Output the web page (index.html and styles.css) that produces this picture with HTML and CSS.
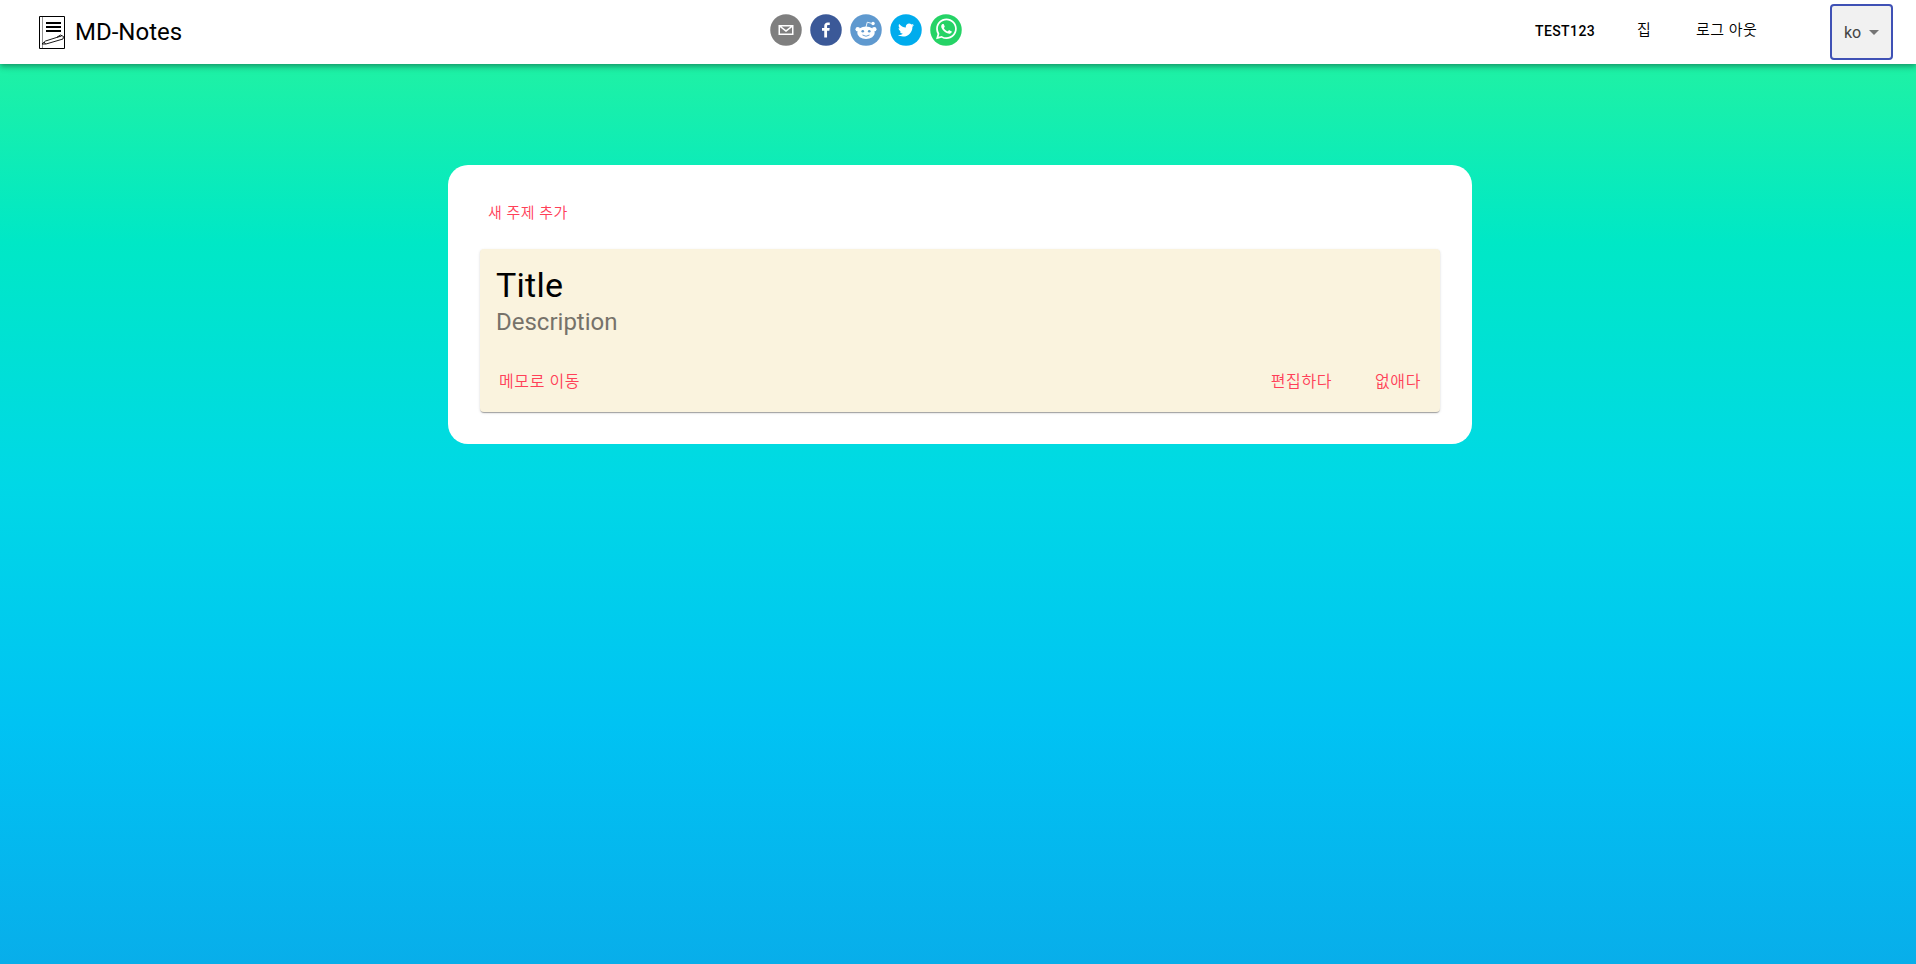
FILE: index.html
```html
<!DOCTYPE html>
<html lang="ko">
<head>
<meta charset="utf-8">
<title>MD-Notes</title>
<link rel="stylesheet" href="styles.css">
</head>
<body>
<header class="navbar">
  <div class="brand">
    <svg class="logo" viewBox="0 0 26 33"><path d="M.5.5h25v32H.5z" fill="#fff" stroke="#000"/><path d="M3.500 1v31" stroke="#777" stroke-width=".8"/><path d="M7 7h15M7 11h15M7 15h15" stroke="#000" stroke-width="2"/><path d="M3 28l3.500-3 11-3.500 4-2.500 3 1.500-.5 2.500-17 5zM5 26l1.500 2M17.500 21.500l5-1.500" fill="#fff" stroke="#000" stroke-width=".9"/></svg>
    <span class="brand-name">MD-Notes</span>
  </div>
  <div class="share">
    <svg viewBox="0 0 64 64"><circle cx="32" cy="32" r="31.500" fill="#7f7f7f"/><path fill="#fff" d="M17,22v20h30V22H17z M41.1,25L32,32.1L22.9,25H41.1z M20,39V26.6l12,9.3l12-9.3V39H20z"/></svg>
    <svg viewBox="0 0 64 64"><circle cx="32" cy="32" r="31.500" fill="#3b5998"/><path fill="#fff" d="M34.1,47V33.3h4.6l0.7-5.3h-5.3v-3.4c0-1.5,0.4-2.6,2.6-2.6l2.8,0v-4.8c-0.5-0.1-2.2-0.2-4.1-0.2c-4.1,0-6.9,2.5-6.9,7V28H24v5.3h4.5V47H34.1z"/></svg>
    <svg viewBox="0 0 64 64"><circle cx="32" cy="32" r="31.500" fill="#5f99cf"/><path d="M32 26l2.500-9.500 8 2" fill="none" stroke="#fff" stroke-width="1.800"/><circle cx="46" cy="19" r="3.500" fill="#fff"/><circle cx="15.500" cy="30.500" r="4.500" fill="#fff"/><circle cx="48.500" cy="30.500" r="4.500" fill="#fff"/><ellipse cx="32" cy="37.500" rx="17.500" ry="12.500" fill="#fff"/><circle cx="25.500" cy="34.500" r="2.700" fill="#5f99cf"/><circle cx="38.500" cy="34.500" r="2.700" fill="#5f99cf"/><path d="M25 42q7 5 14 0" fill="none" stroke="#5f99cf" stroke-width="1.800"/></svg>
    <svg viewBox="0 0 64 64"><circle cx="32" cy="32" r="31.500" fill="#00aced"/><path fill="#fff" d="M48,22.1c-1.2,0.5-2.4,0.9-3.8,1c1.4-0.8,2.4-2.1,2.9-3.6c-1.3,0.8-2.7,1.3-4.2,1.6C41.7,19.8,40,19,38.2,19c-3.6,0-6.6,2.9-6.6,6.6c0,0.5,0.1,1,0.2,1.5c-5.5-0.3-10.3-2.9-13.5-6.9c-0.6,1-0.9,2.1-0.9,3.3c0,2.3,1.2,4.3,2.9,5.5c-1.1,0-2.1-0.3-3-0.8c0,0,0,0.1,0,0.1c0,3.2,2.3,5.8,5.3,6.4c-0.6,0.1-1.1,0.2-1.7,0.2c-0.4,0-0.8,0-1.2-0.1c0.8,2.6,3.3,4.5,6.1,4.6c-2.2,1.8-5.1,2.8-8.2,2.8c-0.5,0-1.1,0-1.6-0.1c2.9,1.9,6.4,2.9,10.1,2.9c12.1,0,18.7-10,18.7-18.7c0-0.3,0-0.6,0-0.8C46,24.5,47.1,23.4,48,22.1z"/></svg>
    <svg viewBox="0 0 64 64"><circle cx="32" cy="32" r="31.500" fill="#25d366"/><path fill="#fff" d="m42.32286,33.93287c-0.5178,-0.2589 -3.04726,-1.49644 -3.52105,-1.66732c-0.4712,-0.17346 -0.81554,-0.2589 -1.15987,0.2589c-0.34175,0.51004 -1.33075,1.66474 -1.63108,2.00648c-0.30032,0.33658 -0.60064,0.36247 -1.11327,0.12945c-0.5178,-0.2589 -2.17994,-0.80259 -4.14759,-2.56312c-1.53269,-1.37217 -2.56312,-3.05503 -2.86603,-3.57283c-0.30033,-0.5178 -0.03366,-0.80259 0.22524,-1.06149c0.23301,-0.23301 0.5178,-0.59547 0.7767,-0.90616c0.25372,-0.31068 0.33657,-0.5178 0.51262,-0.85437c0.17088,-0.36246 0.08544,-0.64725 -0.04402,-0.90615c-0.12945,-0.2589 -1.15987,-2.79613 -1.58964,-3.80584c-0.41424,-1.00971 -0.84142,-0.88027 -1.15987,-0.88027c-0.29773,-0.02588 -0.64208,-0.02588 -0.98382,-0.02588c-0.34693,0 -0.90616,0.12945 -1.37736,0.62136c-0.4712,0.5178 -1.80194,1.76053 -1.80194,4.27186c0,2.51134 1.84596,4.945 2.10227,5.30747c0.2589,0.33657 3.63497,5.51458 8.80262,7.74113c1.23237,0.5178 2.1903,0.82848 2.94111,1.08738c1.23237,0.38836 2.35599,0.33657 3.24402,0.20712c0.99159,-0.15534 3.04985,-1.24272 3.47963,-2.45956c0.44013,-1.21683 0.44013,-2.22654 0.31068,-2.45955c-0.12945,-0.23301 -0.46601,-0.36247 -0.98382,-0.59548m-9.40068,12.84407l-0.02589,0c-3.05503,0 -6.08417,-0.82849 -8.72495,-2.38189l-0.62136,-0.37023l-6.47252,1.68286l1.73463,-6.29129l-0.41424,-0.64725c-1.70875,-2.71846 -2.6149,-5.85116 -2.6149,-9.07706c0,-9.39809 7.68934,-17.06155 17.15993,-17.06155c4.58253,0 8.88029,1.78642 12.11655,5.02268c3.23625,3.21036 5.02267,7.50812 5.02267,12.06476c-0.0078,9.3981 -7.69712,17.06155 -17.14699,17.06155m14.58906,-31.58846c-3.93529,-3.80584 -9.1133,-5.95471 -14.62789,-5.95471c-11.36055,0 -20.60848,9.2065 -20.61625,20.52564c0,3.61684 0.94757,7.14565 2.75211,10.26282l-2.92557,10.63564l10.93337,-2.85309c3.0136,1.63108 6.4052,2.4958 9.85634,2.49839l0.01037,0c11.36574,0 20.61884,-9.2091 20.62403,-20.53082c0,-5.48093 -2.14111,-10.64081 -6.03239,-14.51915"/></svg>
  </div>
  <nav class="links">
    <a class="link latin">TEST123</a>
    <a class="link home">집</a>
    <a class="link logout">로그 아웃</a>
    <div class="select"><span>ko</span><i class="caret"></i></div>
  </nav>
</header>
<main class="panel">
  <button class="btn add">새 주제 추가</button>
  <article class="topic">
    <h2 class="title">Title</h2>
    <p class="description">Description</p>
    <div class="actions">
      <button class="btn go">메모로 이동</button>
      <button class="btn edit">편집하다</button>
      <button class="btn remove">없애다</button>
    </div>
  </article>
</main>
</body>
</html>
```
FILE: styles.css
```css
* { box-sizing: border-box; }
body {
  margin: 0;
  min-height: 964px;
  font-family: Roboto, "Noto Sans CJK KR", sans-serif;
  background: linear-gradient(180deg, #2af598 0%, #00e8c6 25%, #00d8e6 50%, #00c3f3 75%, #08aeea 100%);
}
.navbar {
  position: relative;
  display: grid;
  grid-template-columns: 770px 192px 1fr;
  height: 64px;
  background: #fff;
  box-shadow: 0 2px 4px -1px rgba(0,0,0,.2), 0 4px 5px rgba(0,0,0,.14), 0 1px 10px rgba(0,0,0,.12);
}
.brand { display: flex; align-items: center; padding-left: 39px; }
.logo { width: 26px; height: 33px; margin-right: 10px; }
.brand-name { font-size: 24px; line-height: 32px; }
.share { display: flex; gap: 8px; padding-top: 14px; }
.share svg { width: 32px; height: 32px; flex: none; }
.links { display: flex; padding-right: 23px; justify-content: flex-end; }
.link { font-size: 15px; font-weight: 350; line-height: 24px; letter-spacing: .5px; padding-top: 18px; white-space: nowrap; }
.latin { font-size: 14px; font-weight: 500; width: 102px; padding-top: 19px; letter-spacing: .4px; }
.home { width: 59px; }
.logout { width: 134px; }
.select {
  display: flex; align-items: center; gap: 8px;
  width: 63px; height: 56px; margin-top: 4px; padding-left: 12px;
  border: 2px solid #3f51b5; border-radius: 4px;
  background: #f1f1f1; color: #444; font-size: 16px;
}
.caret { border: 5px solid transparent; border-top-color: #757575; border-bottom: 0; }
.panel {
  width: 1024px; height: 279px; margin: 101px 0 0 448px; padding: 30px 32px;
  background: #fff; border-radius: 20px;
}
.btn {
  border: 0; padding: 6px 8px; background: none; color: #ff4058;
  font: 350 15px/24px Roboto, "Noto Sans CJK KR", sans-serif; letter-spacing: .5px; white-space: nowrap;
}
.add { display: block; height: 36px; margin-bottom: 18px; }
.topic {
  height: 163px; padding: 16px; border-radius: 4px; background: #faf3de;
  box-shadow: 0 2px 1px -1px rgba(0,0,0,.2), 0 1px 1px rgba(0,0,0,.14), 0 1px 3px rgba(0,0,0,.12);
}
.title { margin: 0; font-size: 34px; line-height: 40px; font-weight: 400; letter-spacing: .25px; }
.description { margin: 0; padding-top: 1px; font-size: 24px; line-height: 32px; color: #76726a; }
.actions { display: flex; margin-top: 26px; }
.actions .btn { font-size: 16px; padding: 6px 3px; letter-spacing: .6px; }
.go { margin-right: auto; }
.actions .edit { margin-right: 37px; }
```
